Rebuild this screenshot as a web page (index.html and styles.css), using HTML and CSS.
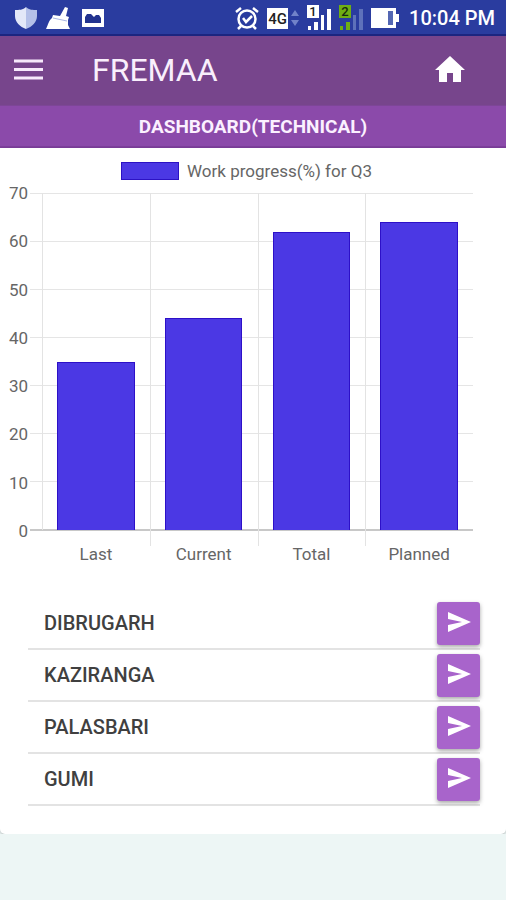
FILE: index.html
```
<!DOCTYPE html>
<html lang="en">
<head>
	<meta charset="utf-8">
	<meta name="viewport" content="width=device-width, initial-scale=1">
	<title>FREMAA</title>
	<link rel="stylesheet" href="styles.css">
</head>

<body>
	<div class="status-bar">
		<svg width="24" height="24" viewBox="0 0 24 24">
			<path d="M12 1C9 4 5 4 1 4v6c0 6 5 11 11 13z" fill="#e3e8f8"/>
			<path d="M12 1c3 3 7 3 11 3v6c0 6-5 11-11 13z" fill="#b4c0e8"/>
		</svg>
		<svg width="24" height="24" viewBox="0 0 24 24" fill="#fff">
			<path d="M0 23c2-4 3-9 6-11l1-3 7 1 5-9 3 1-2 8 3 1-1 3v5l2 4z"/>
			<path d="M7 12l14 3" stroke="#a9b5e2" fill="none"/>
		</svg>
		<svg class="photo" width="22" height="20" viewBox="0 0 22 20">
			<path d="M0 1h22v18H0z" fill="#fff"/>
			<path d="M3 15V9l2-3h4l3 3 2-2h3l2 3v5z" fill="#22338f"/>
		</svg>
		<span class="spacer"></span>
		<svg width="24" height="24" viewBox="0 0 24 24" fill="none" stroke="#fff" stroke-width="2.5">
			<circle cx="12" cy="13" r="8.5"/>
			<path d="M1 6l5-4M23 6l-5-4M6 20l-3 3M18 20l3 3M8 12l3 4 6-6"/>
		</svg>
		<span class="net">4G</span>
		<svg class="arrows" width="8" height="18" viewBox="0 0 8 18" fill="#7182c9">
			<path d="M4 1l4 6H0zM4 17l-4-6h8z"/>
		</svg>
		<svg class="signal" width="24" height="26" viewBox="0 0 24 26" fill="#fff">
			<path d="M0 0h12v13H0z"/>
			<text x="6" y="11" text-anchor="middle" fill="#222">1</text>
			<path d="M1 21h3v4H1zM7 17h4v8H7zM14 10h3v15h-3zM20 4h4v21h-4z"/>
		</svg>
		<svg class="signal" width="24" height="26" viewBox="0 0 24 26" fill="#6fae13">
			<path d="M0 0h12v13H0z"/>
			<text x="6" y="11" text-anchor="middle" fill="#162a10">2</text>
			<path d="M1 21h3v4H1zM7 17h4v8H7z"/>
			<path d="M14 10h3v15h-3zM20 4h4v21h-4z" fill="#5e71ba"/>
		</svg>
		<svg class="battery" width="28" height="20" viewBox="0 0 28 20">
			<path d="M0 0h25v6h3v8h-3v6H0z" fill="#fff"/>
			<path d="M17 3h5v14h-5z" fill="#5467b3"/>
		</svg>
		<span class="time">10:04 PM</span>
	</div>

	<header class="app-bar">
		<button type="button" class="icon-btn" aria-label="Menu">
			<svg width="30" height="22" viewBox="0 0 30 22" stroke="#f7e9fb" stroke-width="3">
				<path d="M0 2h29M0 10.5h29M0 19h29"/>
			</svg>
		</button>
		<h1>FREMAA</h1>
		<a class="home" href="#" aria-label="Home">
			<svg width="32" height="30" viewBox="0 0 32 30" fill="#fff">
				<path d="M13 27v-9h6v9h8V15h4L16 1 1 15h4v12z"/>
			</svg>
		</a>
	</header>

	<h2 class="sub-bar">DASHBOARD(TECHNICAL)</h2>

	<main class="card">
		<section class="chart">
			<div class="legend"><span class="swatch"></span>Work progress(%) for Q3</div>
			<div class="plot">
				<div class="y-axis">
					<span>70</span><span>60</span><span>50</span><span>40</span><span>30</span><span>20</span><span>10</span><span>0</span>
				</div>
				<div class="lines">
					<i></i><i></i><i></i><i></i><i></i><i></i><i></i><i></i>
				</div>
				<div class="columns" id="columns"></div>
			</div>
		</section>

		<ul class="sites">
			<li>
				<span>DIBRUGARH</span>
				<button type="button" aria-label="Open DIBRUGARH"><svg width="24" height="22" viewBox="0 0 24 22"><path d="M1 0l23 10L1 20v-7l14-3L1 7z"/></svg></button>
			</li>
			<li>
				<span>KAZIRANGA</span>
				<button type="button" aria-label="Open KAZIRANGA"><svg width="24" height="22" viewBox="0 0 24 22"><path d="M1 0l23 10L1 20v-7l14-3L1 7z"/></svg></button>
			</li>
			<li>
				<span>PALASBARI</span>
				<button type="button" aria-label="Open PALASBARI"><svg width="24" height="22" viewBox="0 0 24 22"><path d="M1 0l23 10L1 20v-7l14-3L1 7z"/></svg></button>
			</li>
			<li>
				<span>GUMI</span>
				<button type="button" aria-label="Open GUMI"><svg width="24" height="22" viewBox="0 0 24 22"><path d="M1 0l23 10L1 20v-7l14-3L1 7z"/></svg></button>
			</li>
		</ul>
	</main>

	<script src="chart.js"></script>
</body>

</html>
```

FILE: styles.css
```
* {
	box-sizing: border-box;
}

body {
	margin: 0;
	background-color: #edf6f5;
	font-family: Roboto, "Liberation Sans", sans-serif;
}

svg {
	display: block;
	flex: none;
}

.status-bar {
	display: flex;
	align-items: center;
	gap: 8px;
	height: 36px;
	padding: 2px 11px 0 14px;
	background-color: #2a3c9f;
	border-bottom: 2px solid #1c2580;
	color: #fff;
}

.photo {
	margin-left: 4px;
}

.spacer {
	flex: 1;
}

.net {
	width: 21px;
	height: 21px;
	background-color: #fff;
	color: #222;
	font-size: 15px;
	font-weight: 500;
	line-height: 22px;
	text-align: center;
}

.arrows {
	margin-left: -5px;
}

.signal {
	font-size: 13px;
	font-weight: 500;
}

.time {
	margin-left: 2px;
	font-size: 20px;
	font-weight: 500;
	white-space: nowrap;
}

.app-bar {
	display: flex;
	align-items: center;
	height: 70px;
	padding: 0 40px 2px 14px;
	background-color: #77458c;
	border-bottom: 1px solid #7d4697;
}

.icon-btn {
	padding: 0;
	border: none;
	background: none;
	cursor: pointer;
}

.app-bar h1 {
	flex: 1;
	margin: 0 0 0 48px;
	color: #f9effc;
	font-size: 32px;
	font-weight: 400;
}

.sub-bar {
	height: 42px;
	margin: 0;
	background-color: #8b4aaa;
	border-bottom: 2px solid #7d3f9c;
	color: #fbf0ff;
	font-size: 19px;
	font-weight: 700;
	line-height: 42px;
	text-align: center;
}

.card {
	padding: 12px 26px 28px 8px;
	background-color: #fff;
	border-radius: 0 0 5px 5px;
	box-shadow: 0 1px 3px rgba(0, 0, 0, 0.25);
}

.chart {
	padding-right: 7px;
	color: #666;
	font-size: 17px;
}

/* legend is centred on the whole chart */
.legend {
	display: flex;
	align-items: center;
	justify-content: center;
	gap: 8px;
	height: 21px;
	margin-left: 12px;
}

.swatch {
	width: 58px;
	height: 18px;
	background-color: #4b38e4;
	border: 1px solid #2c12c4;
}

/* grid lines and bars share one cell */
.plot {
	display: grid;
	grid-template-columns: 20px 14px 1fr;
	grid-template-rows: 338px 36px;
	margin-top: 12px;
}

.y-axis {
	display: flex;
	flex-direction: column;
	justify-content: space-between;
	margin: -10px 0;
	line-height: 20px;
	text-align: right;
}

.lines {
	grid-area: 1 / 2 / 2 / 4;
	display: flex;
	flex-direction: column;
	justify-content: space-between;
	padding-left: 2px;
}

.lines i {
	height: 1px;
	background-color: #e5e5e5;
}

.lines i:last-child {
	height: 2px;
	background-color: #c8c8c8;
}

.columns {
	grid-area: 1 / 3 / 3 / 4;
	display: grid;
	grid-template-columns: repeat(4, 1fr);
}

.column {
	display: grid;
	grid-template-rows: 337px 36px;
	justify-items: center;
	background: linear-gradient(#e3e3e3, #e3e3e3) no-repeat 0 0 / 1px 353px;
}

.column:first-child {
	background-size: 1px 337px;
}

.bar {
	align-self: end;
	width: 72%;
	background-color: #4b38e4;
	border: 1px solid #2d10c8;
	border-bottom: none;
}

.label {
	align-self: end;
	line-height: 24px;
}

.sites {
	margin: 31px 0 0 20px;
	padding: 0;
	list-style: none;
}

.sites li {
	display: flex;
	align-items: center;
	justify-content: space-between;
	height: 52px;
	padding-left: 16px;
	border-bottom: 2px solid #e3e3e3;
	color: #404040;
	font-size: 20px;
	font-weight: 500;
}

.sites button {
	display: flex;
	align-items: center;
	justify-content: center;
	width: 43px;
	height: 43px;
	padding: 0;
	border: none;
	border-radius: 3px;
	background-color: #a864cb;
	box-shadow: 0 2px 4px rgba(0, 0, 0, 0.35);
	fill: #fff;
	cursor: pointer;
}
```

FILE: chart.js
```
const max = 70;
const progress = [
	{ label: 'Last', value: 35 },
	{ label: 'Current', value: 44 },
	{ label: 'Total', value: 62 },
	{ label: 'Planned', value: 64 }
];

const columns = document.querySelector('#columns');

progress.forEach((item) => {
	columns.innerHTML += `
		<div class="column">
			<div class="bar" style="height: ${item.value / max * 100}%"></div>
			<span class="label">${item.label}</span>
		</div>
	`;
});
```
